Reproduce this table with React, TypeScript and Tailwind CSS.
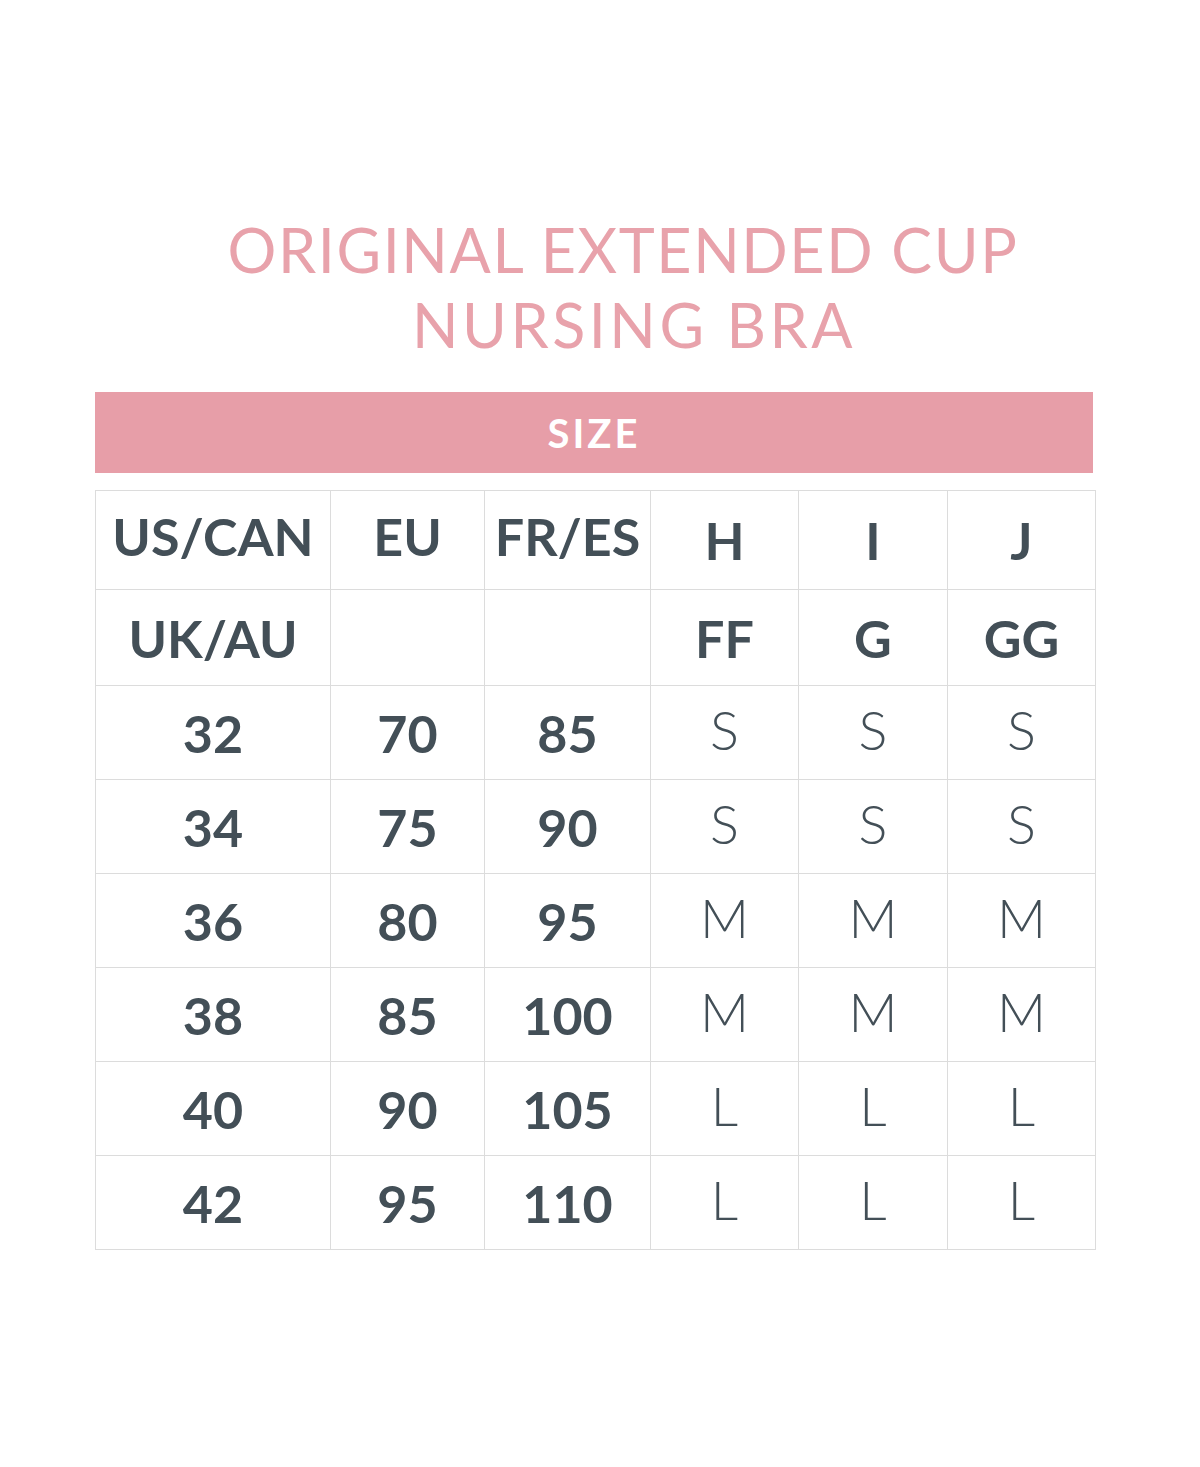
const rows = [
  ["32", "70", "85", "S", "S", "S"],
  ["34", "75", "90", "S", "S", "S"],
  ["36", "80", "95", "M", "M", "M"],
  ["38", "85", "100", "M", "M", "M"],
  ["40", "90", "105", "L", "L", "L"],
  ["42", "95", "110", "L", "L", "L"],
];

const widths = ["w-[235px]", "w-[154px]", "w-[166px]", "w-[148px]", "w-[149px]", "w-[148px]"];

export default function App() {
  return (
    <div className="w-[1200px] h-[1467px] bg-white font-['Lato',sans-serif] text-[#434f57]">
      <div className="pt-[212px] text-center text-[#e8a2ab] text-[61px] font-normal leading-[75px]">
        <div className="pl-[46px] tracking-[1.6px]">ORIGINAL EXTENDED CUP</div>
        <div className="pl-[68px] tracking-[3.5px]">NURSING BRA</div>
      </div>
      <div className="mt-[30px] ml-[95px] w-[998px] h-[81px] bg-[#e79ea8] flex items-center justify-center text-white text-[40px] font-bold tracking-[3px]">
        SIZE
      </div>
      <table className="mt-[17px] ml-[95px] w-[1000px] border-collapse table-fixed">
        <colgroup>
          {widths.map((w, i) => (
            <col key={i} className={w} />
          ))}
        </colgroup>
        <tbody>
          <tr className="h-[99px]">
            {["US/CAN", "EU", "FR/ES"].map((t) => (
              <td key={t} className="border border-[#dcdcdc] text-center align-middle pb-[8px] text-[52px] font-bold">
                {t}
              </td>
            ))}
            {["H", "I", "J"].map((t) => (
              <td key={t} className="border border-[#dcdcdc] text-center align-middle text-[52px] font-bold">
                {t}
              </td>
            ))}
          </tr>
          <tr className="h-[96px]">
            {["UK/AU", "", "", "FF", "G", "GG"].map((t, i) => (
              <td key={i} className="border border-[#dcdcdc] text-center align-middle text-[52px] font-bold">
                {t}
              </td>
            ))}
          </tr>
          {rows.map((r, ri) => (
            <tr key={ri} className="h-[94px]">
              {r.map((t, i) => (
                <td
                  key={i}
                  className={
                    i < 3
                      ? "border border-[#dcdcdc] text-center align-middle text-[52px] font-bold"
                      : "border border-[#dcdcdc] text-center align-middle text-[54px] font-light pb-[6px]"
                  }
                >
                  {t}
                </td>
              ))}
            </tr>
          ))}
        </tbody>
      </table>
    </div>
  );
}
